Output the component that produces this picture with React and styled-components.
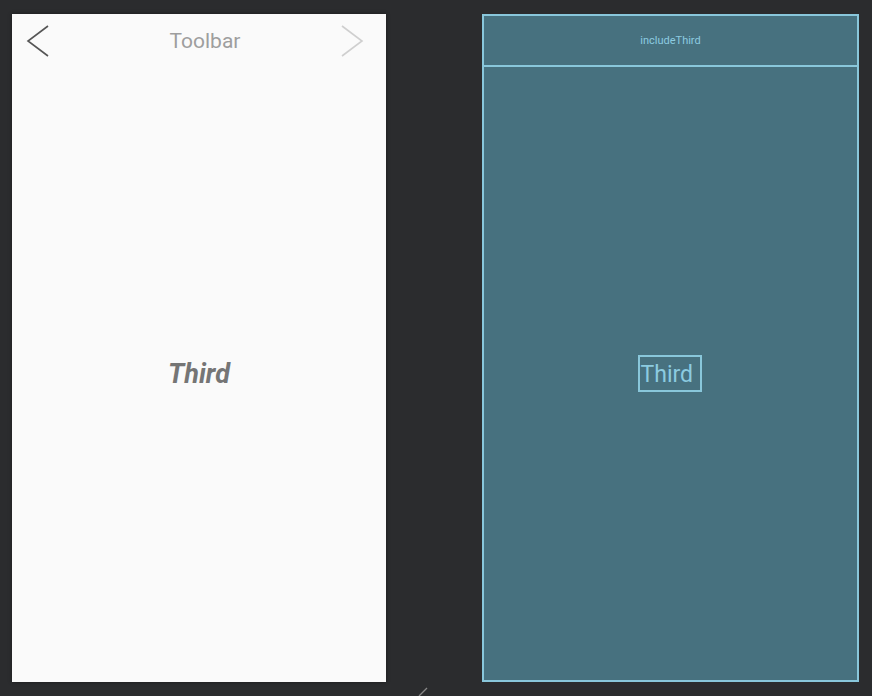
import React from "react";
import styled, { createGlobalStyle } from "styled-components";

const Global = createGlobalStyle`
  html, body { margin: 0; padding: 0; background: #2b2c2e; }
  body { width: 872px; height: 696px; overflow: hidden; font-family: Roboto, "Noto Sans", sans-serif; }
`;

const Stage = styled.div`
  position: relative;
  width: 872px;
  height: 696px;
  background: #2b2c2e;
  display: flex;
  align-items: flex-start;
  padding: 14px 0 0 12px;
  box-sizing: border-box;
  gap: 96px;
`;

const Phone = styled.div`
  width: 374px;
  height: 668px;
  background: #fafafa;
  display: flex;
  flex-direction: column;
  box-shadow: 0 0 4px rgba(0,0,0,0.4);
`;

const Toolbar = styled.div`
  height: 54px;
  display: flex;
  align-items: center;
  justify-content: space-between;
  padding: 0 22px 0 14px;
`;

const ToolbarTitle = styled.span`
  font-family: Roboto, sans-serif;
  font-size: 21px;
  color: #9e9e9e;
  margin-left: 20px;
  padding-bottom: 1px;
`;

const Body = styled.div`
  flex: 1;
  display: flex;
  align-items: center;
  justify-content: center;
  padding-bottom: 2px;
`;

const ThirdText = styled.span`
  font-family: Roboto, sans-serif;
  font-weight: 700;
  font-style: italic;
  font-size: 27px;
  color: #757575;
`;

const Blueprint = styled.div`
  width: 377px;
  height: 668px;
  background: #47717f;
  border: 2px solid #89c7db;
  box-sizing: border-box;
  display: flex;
  flex-direction: column;
`;

const IncludeBox = styled.div`
  height: 51px;
  border-bottom: 2px solid #89c7db;
  display: flex;
  align-items: center;
  justify-content: center;
  box-sizing: border-box;
  font-family: Roboto, sans-serif;
  font-size: 11px;
  color: #8ccbe0;
`;

const BlueBody = styled.div`
  flex: 1;
  display: flex;
  align-items: center;
  justify-content: center;
  padding: 0 2px 1px 0;
`;

const BlueLabel = styled.div`
  width: 64px;
  height: 37px;
  border: 2px solid #89c7db;
  box-sizing: border-box;
  display: flex;
  align-items: center;
  justify-content: flex-start;
  padding: 3px 0 0 1px;
  font-family: Roboto, sans-serif;
  font-size: 23px;
  color: #8ccbe0;
`;

const Handle = styled.svg`
  position: absolute;
  left: 418px;
  top: 686px;
`;

export default function App() {
  return (
    <>
      <Global />
      <Stage>
        <Phone>
          <Toolbar>
            <svg width="24" height="34" viewBox="0 0 24 34">
              <polyline points="22,2 2,17 22,32" fill="none" stroke="#555" strokeWidth="1.6" />
            </svg>
            <ToolbarTitle>Toolbar</ToolbarTitle>
            <svg width="24" height="34" viewBox="0 0 24 34">
              <polyline points="2,2 22,17 2,32" fill="none" stroke="#cfcfcf" strokeWidth="1.6" />
            </svg>
          </Toolbar>
          <Body>
            <ThirdText>Third</ThirdText>
          </Body>
        </Phone>
        <Blueprint>
          <IncludeBox>includeThird</IncludeBox>
          <BlueBody>
            <BlueLabel>Third</BlueLabel>
          </BlueBody>
        </Blueprint>
      </Stage>
      <Handle width="12" height="12" viewBox="0 0 12 12">
        <line x1="1" y1="10" x2="9" y2="2" stroke="#888" strokeWidth="1.2" />
      </Handle>
    </>
  );
}
